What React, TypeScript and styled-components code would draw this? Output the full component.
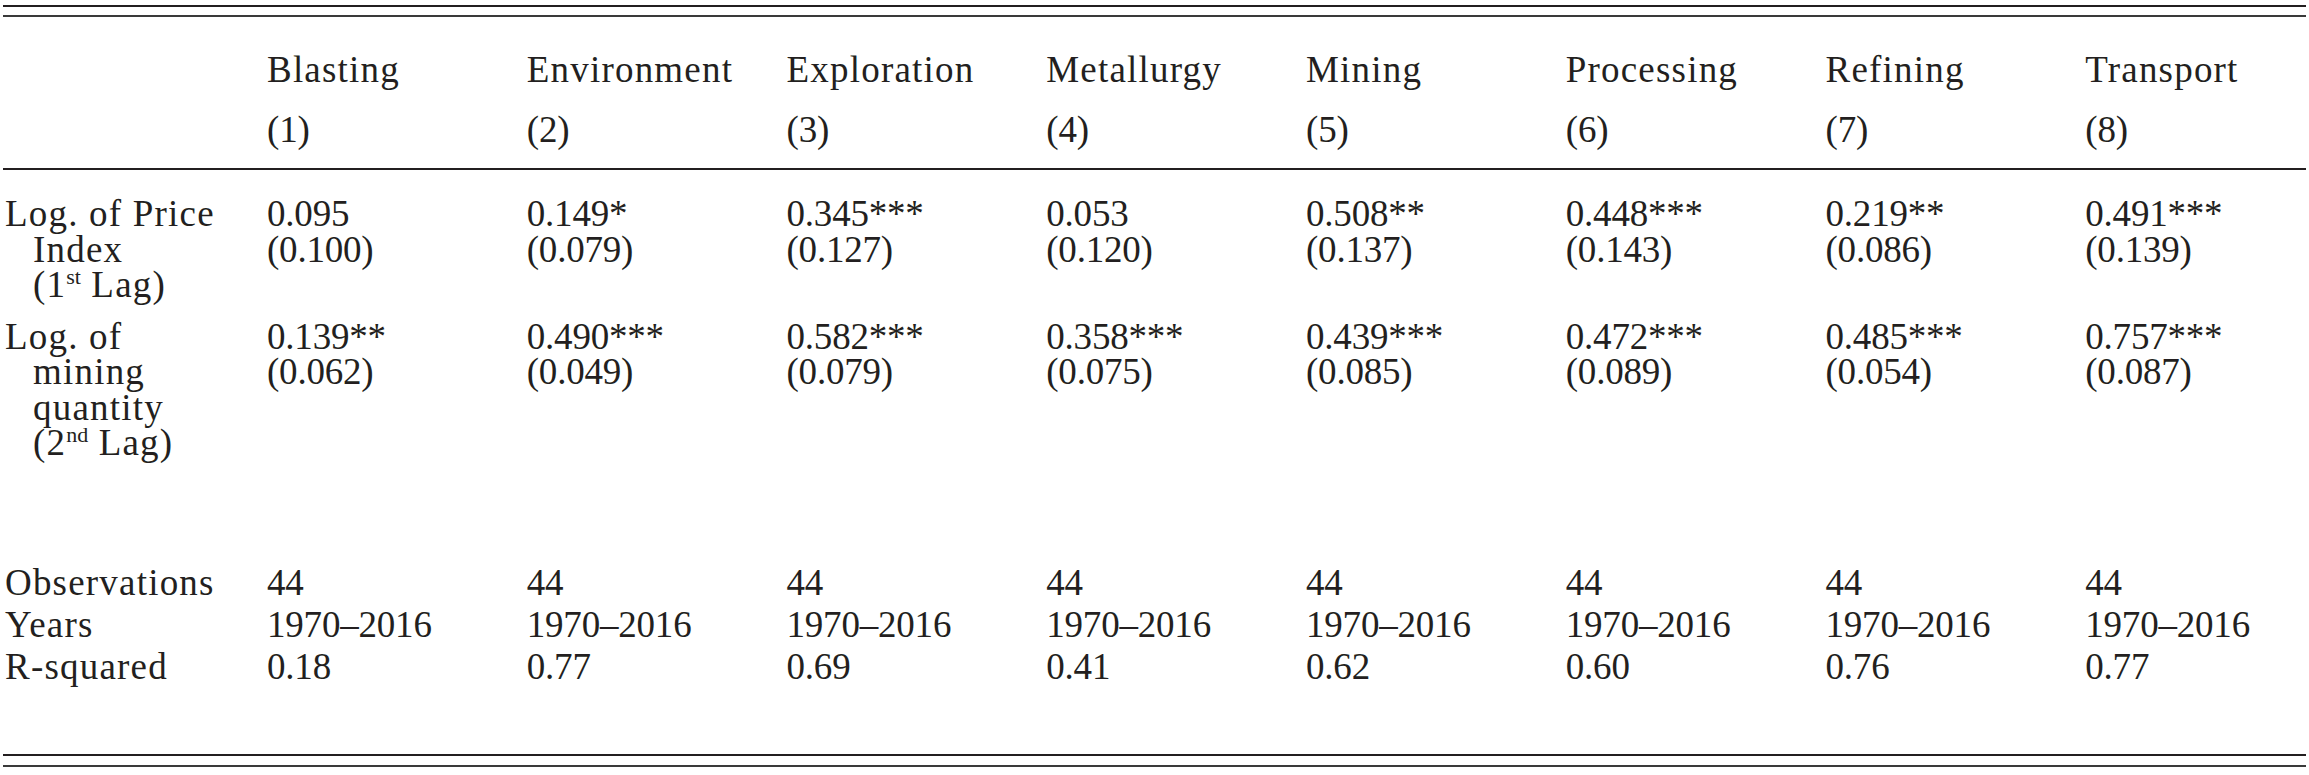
import styled, { createGlobalStyle } from "styled-components";

const GlobalStyle = createGlobalStyle`
    html, body {
        margin: 0;
        padding: 0;
        background: #ffffff;
    }
    body {
        font-family: "Liberation Serif", "Times New Roman", serif;
        color: #231f20;
    }
`;

interface IRow {
    label: string[][];
    values: string[][];
    top: number;
}

const columns = ['Blasting', 'Environment', 'Exploration', 'Metallurgy', 'Mining', 'Processing', 'Refining', 'Transport'];

const rows: IRow[] = [
    {
        label: [['Log. of Price'], ['Index'], ['(1', 'st', ' Lag)']],
        values: [
            ['0.095', '(0.100)'], ['0.149*', '(0.079)'], ['0.345***', '(0.127)'], ['0.053', '(0.120)'],
            ['0.508**', '(0.137)'], ['0.448***', '(0.143)'], ['0.219**', '(0.086)'], ['0.491***', '(0.139)'],
        ],
        top: 26.4,
    },
    {
        label: [['Log. of'], ['mining'], ['quantity'], ['(2', 'nd', ' Lag)']],
        values: [
            ['0.139**', '(0.062)'], ['0.490***', '(0.049)'], ['0.582***', '(0.079)'], ['0.358***', '(0.075)'],
            ['0.439***', '(0.085)'], ['0.472***', '(0.089)'], ['0.485***', '(0.054)'], ['0.757***', '(0.087)'],
        ],
        top: 16,
    },
    {
        label: [['Observations']],
        values: Array(8).fill(['44']),
        top: 104,
    },
    {
        label: [['Years']],
        values: Array(8).fill(['1970–2016']),
        top: 6.5,
    },
    {
        label: [['R-squared']],
        values: ['0.18', '0.77', '0.69', '0.41', '0.62', '0.60', '0.76', '0.77'].map(v => [v]),
        top: 6.5,
    },
];

const TableWrap = styled.div`
    padding: 5px 3px 0 3px;
    width: 2303px;
    font-size: 37px;
    line-height: 35.5px;
`;

const Rule = styled.div<{ $top: number; $tone?: string }>`
    height: 2px;
    margin-top: ${p => p.$top}px;
    background: ${p => p.$tone || '#231f20'};
`;

const Row = styled.div<{ $top: number }>`
    display: grid;
    grid-template-columns: 264px repeat(7, 259.75px) 1fr;
    margin-top: ${p => p.$top}px;
`;

// words are set a touch wider, figures a touch tighter, like the original typeface
const Cell = styled.div<{ $words?: boolean }>`
    white-space: nowrap;
    letter-spacing: ${p => (p.$words ? '1.2px' : '-0.2px')};
`;

const LabelLine = styled.div<{ $indent: boolean }>`
    white-space: nowrap;
    padding-left: ${p => (p.$indent ? 30 : 2)}px;
`;

const Sup = styled.sup`
    font-size: 22px;
    line-height: 0;
    letter-spacing: 0;
    vertical-align: 13px;
`;

const Line = styled.div`
    white-space: nowrap;
`;

export default function App() {
    return (
        <>
            <GlobalStyle />
            <TableWrap>
                <Rule $top={0} />
                <Rule $top={8} $tone="#3a3a3a" />
                <Row $top={35}>
                    <Cell />
                    {columns.map(c => <Cell key={c} $words>{c}</Cell>)}
                </Row>
                <Row $top={24.5}>
                    <Cell />
                    {columns.map((c, i) => <Cell key={`n-${c}`}>({i + 1})</Cell>)}
                </Row>
                <Rule $top={20.5} />
                {rows.map((row, ri) => (
                    <Row key={`row-${ri}`} $top={row.top}>
                        <Cell $words>
                            {row.label.map((parts, li) => (
                                <LabelLine key={`l-${li}`} $indent={li > 0}>
                                    {parts.length > 1
                                        ? <>{parts[0]}<Sup>{parts[1]}</Sup>{parts[2]}</>
                                        : parts[0]}
                                </LabelLine>
                            ))}
                        </Cell>
                        {row.values.map((v, vi) => (
                            <Cell key={`v-${vi}`}>
                                {v.map((line, k) => <Line key={`x-${k}`}>{line}</Line>)}
                            </Cell>
                        ))}
                    </Row>
                ))}
                <Rule $top={70} />
                <Rule $top={9} $tone="#3a3a3a" />
            </TableWrap>
        </>
    );
}
